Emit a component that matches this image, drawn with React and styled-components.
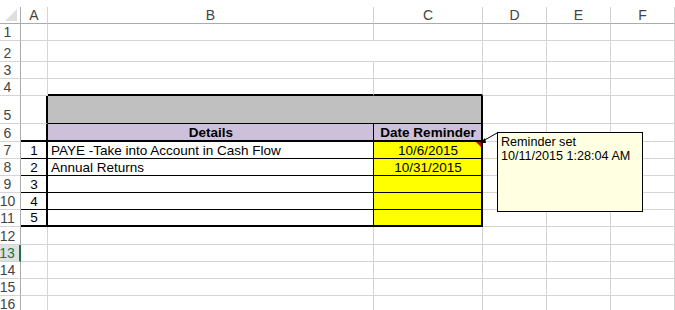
import styled, { createGlobalStyle } from "styled-components";

const GlobalStyle = createGlobalStyle`
  html, body {
    margin: 0;
    padding: 0;
    background: #ffffff;
  }
  body {
    font-family: "Liberation Sans", Arial, sans-serif;
  }
`;

const GRID = "1px solid #d4d4d4";
const THIN = "1px solid #000000";
const THICK = "2px solid #000000";

const COLS = [
  { name: "A", width: 27 },
  { name: "B", width: 326 },
  { name: "C", width: 109 },
  { name: "D", width: 64 },
  { name: "E", width: 64 },
  { name: "F", width: 64 },
];

const ROW_HEIGHTS = [17, 21, 17, 17, 28, 18, 17, 17, 17, 17, 17, 18, 17, 17, 17, 17];

const items = [
  { details: "PAYE -Take into Account in Cash Flow", date: "10/6/2015" },
  { details: "Annual Returns", date: "10/31/2015" },
  { details: "", date: "" },
  { details: "", date: "" },
  { details: "", date: "" },
];

const Page = styled.div`
  position: relative;
  width: 675px;
  height: 310px;
  overflow: hidden;
  padding-top: 7px;
  box-sizing: border-box;
`;

const Sheet = styled.div`
  display: grid;
  grid-template-columns: 21px ${COLS.map((c) => `${c.width}px`).join(" ")};
  grid-template-rows: 17px ${ROW_HEIGHTS.map((h) => `${h}px`).join(" ")};
`;

const Corner = styled.div`
  box-sizing: border-box;
  border-right: 1px solid #ababab;
  border-bottom: 1px solid #ababab;
  display: flex;
  align-items: flex-end;
  justify-content: flex-end;
  padding: 0 3px 2px 0;
`;

const ColHead = styled.div`
  box-sizing: border-box;
  border-right: ${GRID};
  border-bottom: 1px solid #ababab;
  display: flex;
  align-items: center;
  justify-content: center;
  font-size: 14px;
  color: #444444;
  line-height: 16px;
`;

const RowHead = styled.div`
  box-sizing: border-box;
  border-right: ${(p) => (p.$active ? "2px solid #217346" : "1px solid #ababab")};
  border-bottom: ${GRID};
  background: ${(p) => (p.$active ? "#e1e1e1" : "#ffffff")};
  color: ${(p) => (p.$active ? "#217346" : "#444444")};
  display: flex;
  align-items: flex-end;
  justify-content: center;
  padding: 0 5px 0 0;
  font-size: 14px;
  line-height: 16px;
`;

const Cell = styled.div`
  box-sizing: border-box;
  position: relative;
  grid-column: span ${(p) => p.$span || 1};
  border-right: ${(p) => p.$br || GRID};
  border-bottom: ${(p) => p.$bb || GRID};
  background: ${(p) => p.$bg || "transparent"};
  display: flex;
  align-items: flex-end;
  justify-content: ${(p) => p.$align || "flex-start"};
  padding: 0 2px 0 3px;
  font-size: 13.5px;
  font-weight: ${(p) => (p.$bold ? 700 : 400)};
  line-height: 15px;
  color: #000000;
  white-space: nowrap;
  overflow: visible;
`;

const CommentFlag = styled.span`
  position: absolute;
  top: 0;
  right: 0;
  width: 0;
  height: 0;
  border-top: 5px solid #e00000;
  border-left: 5px solid transparent;
`;

const Note = styled.div`
  position: absolute;
  left: 497px;
  top: 132px;
  width: 146px;
  height: 80px;
  box-sizing: border-box;
  background: #ffffe1;
  border: 1px solid #000000;
  padding: 2px 3px;
  font-size: 12.6px;
  line-height: 14px;
  color: #000000;
`;

const Pointer = styled.svg`
  position: absolute;
  left: 476px;
  top: 130px;
  overflow: visible;
`;

function CornerMark() {
  return (
    <svg width="12" height="12" viewBox="0 0 12 12">
      <polygon points="12,0 12,12 0,12" fill="#dfdfdf" />
    </svg>
  );
}

function cellsForRow(r) {
  const cells = COLS.map((c) => ({ key: c.name }));
  const [A, B, C] = [cells[0], cells[1], cells[2]];

  if (r === 2) {
    B.span = 2;
    cells.splice(2, 1);
    return cells;
  }
  if (r === 4) {
    B.bb = THICK;
    C.bb = THICK;
  }
  if (r === 5) {
    A.br = THICK;
    B.span = 2;
    B.bg = "#c0c0c0";
    B.br = THICK;
    B.bb = THIN;
    cells.splice(2, 1);
    return cells;
  }
  if (r === 6) {
    A.br = THICK;
    A.bb = THICK;
    Object.assign(B, { text: "Details", bg: "#ccc0da", bold: true, align: "center", br: THIN, bb: THICK });
    Object.assign(C, { text: "Date Reminder", bg: "#ccc0da", bold: true, align: "center", br: THICK, bb: THICK });
  }
  if (r >= 7 && r <= 11) {
    const item = items[r - 7];
    const bottom = r === 11 ? THICK : THIN;
    Object.assign(A, { text: String(r - 6), align: "center", br: THICK, bb: bottom });
    Object.assign(B, { text: item.details, br: THIN, bb: bottom });
    Object.assign(C, { text: item.date, bg: "#ffff00", align: "center", br: THICK, bb: bottom, flag: r === 7 });
  }
  return cells;
}

export default function App() {
  return (
    <Page>
      <GlobalStyle />
      <Sheet>
        <Corner>
          <CornerMark />
        </Corner>
        {COLS.map((c) => (
          <ColHead key={c.name}>{c.name}</ColHead>
        ))}
        {ROW_HEIGHTS.map((_, i) => {
          const r = i + 1;
          return [
            <RowHead key={`h${r}`} $active={r === 13}>
              {r}
            </RowHead>,
            ...cellsForRow(r).map((c) => (
              <Cell
                key={`${c.key}${r}`}
                $span={c.span}
                $br={c.br}
                $bb={c.bb}
                $bg={c.bg}
                $bold={c.bold}
                $align={c.align}
              >
                {c.text}
                {c.flag && <CommentFlag />}
              </Cell>
            )),
          ];
        })}
      </Sheet>
      <Pointer width="24" height="16" viewBox="0 0 24 16">
        <line x1="21" y1="3" x2="7" y2="11" stroke="#000" strokeWidth="1" />
        <polygon points="4,13 9,8 10,13" fill="#000" />
      </Pointer>
      <Note>
        Reminder set
        <br />
        10/11/2015 1:28:04 AM
      </Note>
    </Page>
  );
}
